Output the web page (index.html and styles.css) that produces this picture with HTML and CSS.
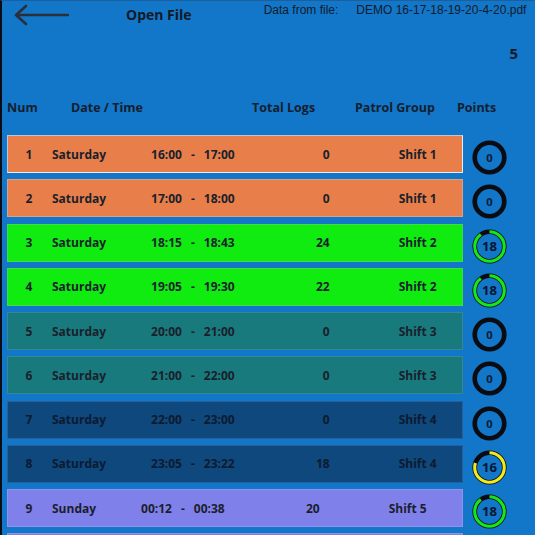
FILE: index.html
```html
<!DOCTYPE html>
<html>
<head>
<meta charset="utf-8">
<link rel="stylesheet" href="styles.css">
</head>
<body>
<div class="app">
  <div class="topbar">
    <svg class="back" width="56" height="22" viewBox="0 0 56 22">
      <path d="M3 11 H55 M13 2 L3 11 L13 20" fill="none" stroke="#2b2f3a" stroke-width="2.6" stroke-linecap="round" stroke-linejoin="round"/>
    </svg>
    <div class="title">Open File</div>
    <div class="data"><span>Data from file:</span><span class="fname">DEMO 16-17-18-19-20-4-20.pdf</span><span class="bar">|</span></div>
  </div>
  <div class="count">5</div>
  <div class="thead">
    <span class="h-num">Num</span>
    <span class="h-date">Date / Time</span>
    <span class="h-logs">Total Logs</span>
    <span class="h-group">Patrol Group</span>
    <span class="h-pts">Points</span>
  </div>
  <div class="list">
    <div class="line">
      <div class="row orange selected"><span class="num">1</span><span class="day">Saturday</span><span class="time"><span>16:00</span><span>-</span><span>17:00</span></span><span class="logs">0</span><span class="shift">Shift 1</span></div>
      <svg class="pts" viewBox="0 0 36 36"><circle class="base" cx="18" cy="18" r="15.2"/><text class="zero" x="18" y="22.5">0</text></svg>
    </div>
    <div class="line">
      <div class="row orange"><span class="num">2</span><span class="day">Saturday</span><span class="time"><span>17:00</span><span>-</span><span>18:00</span></span><span class="logs">0</span><span class="shift">Shift 1</span></div>
      <svg class="pts" viewBox="0 0 36 36"><circle class="base" cx="18" cy="18" r="15.2"/><text class="zero" x="18" y="22.5">0</text></svg>
    </div>
    <div class="line">
      <div class="row green"><span class="num">3</span><span class="day">Saturday</span><span class="time"><span>18:15</span><span>-</span><span>18:43</span></span><span class="logs">24</span><span class="shift">Shift 2</span></div>
      <svg class="pts" viewBox="0 0 36 36"><circle class="base" cx="18" cy="18" r="15.2"/><circle class="arc g" cx="18" cy="18" r="15.2" pathLength="100" stroke-dasharray="90 100"/><text class="val" x="18" y="23">18</text></svg>
    </div>
    <div class="line">
      <div class="row green"><span class="num">4</span><span class="day">Saturday</span><span class="time"><span>19:05</span><span>-</span><span>19:30</span></span><span class="logs">22</span><span class="shift">Shift 2</span></div>
      <svg class="pts" viewBox="0 0 36 36"><circle class="base" cx="18" cy="18" r="15.2"/><circle class="arc g" cx="18" cy="18" r="15.2" pathLength="100" stroke-dasharray="90 100"/><text class="val" x="18" y="23">18</text></svg>
    </div>
    <div class="line">
      <div class="row teal"><span class="num">5</span><span class="day">Saturday</span><span class="time"><span>20:00</span><span>-</span><span>21:00</span></span><span class="logs">0</span><span class="shift">Shift 3</span></div>
      <svg class="pts" viewBox="0 0 36 36"><circle class="base" cx="18" cy="18" r="15.2"/><text class="zero" x="18" y="22.5">0</text></svg>
    </div>
    <div class="line">
      <div class="row teal"><span class="num">6</span><span class="day">Saturday</span><span class="time"><span>21:00</span><span>-</span><span>22:00</span></span><span class="logs">0</span><span class="shift">Shift 3</span></div>
      <svg class="pts" viewBox="0 0 36 36"><circle class="base" cx="18" cy="18" r="15.2"/><text class="zero" x="18" y="22.5">0</text></svg>
    </div>
    <div class="line">
      <div class="row navy"><span class="num">7</span><span class="day">Saturday</span><span class="time"><span>22:00</span><span>-</span><span>23:00</span></span><span class="logs">0</span><span class="shift">Shift 4</span></div>
      <svg class="pts" viewBox="0 0 36 36"><circle class="base" cx="18" cy="18" r="15.2"/><text class="zero" x="18" y="22.5">0</text></svg>
    </div>
    <div class="line">
      <div class="row navy"><span class="num">8</span><span class="day">Saturday</span><span class="time"><span>23:05</span><span>-</span><span>23:22</span></span><span class="logs">18</span><span class="shift">Shift 4</span></div>
      <svg class="pts" viewBox="0 0 36 36"><circle class="base" cx="18" cy="18" r="15.2"/><circle class="arc y" cx="18" cy="18" r="15.2" pathLength="100" stroke-dasharray="80 100"/><text class="val" x="18" y="23">16</text></svg>
    </div>
    <div class="line">
      <div class="row purple"><span class="num">9</span><span class="day">Sunday</span><span class="time"><span>00:12</span><span>-</span><span>00:38</span></span><span class="logs">20</span><span class="shift">Shift 5</span></div>
      <svg class="pts" viewBox="0 0 36 36"><circle class="base" cx="18" cy="18" r="15.2"/><circle class="arc g" cx="18" cy="18" r="15.2" pathLength="100" stroke-dasharray="90 100"/><text class="val" x="18" y="23">18</text></svg>
    </div>
    <div class="line">
      <div class="row purple"></div>
    </div>
  </div>
</div>
</body>
</html>
```

FILE: styles.css
```css
html, body {
  margin: 0;
  padding: 0;
  background: #1276c9;
  overflow: hidden;
}
.app {
  height: 534px;
  overflow: hidden;
  border-left: 2px solid #0b0d16;
  border-top: 1px solid #1d5f9c;
  background: #1276c9;
  font-family: "Open Sans", "DejaVu Sans", sans-serif;
  color: #15202e;
}
.topbar {
  display: flex;
  align-items: flex-start;
  height: 30px;
}
.back {
  margin-left: 11px;
  margin-top: 3px;
  flex: none;
}
.title {
  margin-left: 57px;
  margin-top: 5px;
  font-size: 14px;
  line-height: 18px;
  font-weight: 700;
  color: #141a26;
  white-space: nowrap;
  flex: none;
}
.data {
  margin-left: 72px;
  margin-top: 2px;
  font-family: "Liberation Sans", Arial, sans-serif;
  font-size: 12px;
  line-height: 15px;
  color: #131b2a;
  white-space: nowrap;
  display: flex;
}
.fname {
  margin-left: 18px;
}
.bar {
  margin-left: 12px;
}
.count {
  text-align: right;
  padding-right: 17px;
  font-size: 15px;
  font-weight: 700;
  line-height: 20px;
  margin-top: 12px;
  color: #141a26;
}
.thead {
  display: flex;
  margin-top: 36px;
  font-size: 12.5px;
  font-weight: 700;
  line-height: 18px;
  color: #15202e;
  white-space: nowrap;
}
.h-num { margin-left: 5px; width: 64px; }
.h-date { width: 181px; }
.h-logs { width: 103px; }
.h-group { width: 102px; }
.list {
  margin-top: 18px;
  padding-left: 5px;
}
.line {
  display: flex;
  align-items: flex-start;
  margin-bottom: 6.25px;
}
.row {
  box-sizing: border-box;
  width: 456px;
  height: 38px;
  border: 1px solid rgba(190, 205, 225, 0.45);
  display: flex;
  align-items: center;
  font-size: 12px;
  font-weight: 700;
  white-space: nowrap;
  color: #1a1f2c;
}
.row.selected {
  border-color: #e6ecf2;
  border-top-color: #b9c7d6;
  border-left-color: #b9c7d6;
}
.orange { background: #e87f4b; }
.green { background: #10ec10; border-color: rgba(120, 200, 120, 0.5); }
.teal { background: #187a7c; border-color: rgba(80, 150, 170, 0.5); }
.navy { background: #0e487d; border-color: rgba(60, 120, 180, 0.5); color: #0d1a30; }
.purple { background: #8080eb; border-color: rgba(160, 160, 240, 0.5); }
.num {
  width: 42px;
  text-align: center;
}
.day {
  margin-left: 2px;
}
.time {
  margin-left: 45px;
  display: flex;
  gap: 9px;
}
.logs {
  width: 95px;
  text-align: right;
}
.shift {
  width: 107px;
  text-align: right;
}
.pts {
  width: 35px;
  height: 35px;
  margin-left: 9px;
  margin-top: 5px;
  margin-bottom: -2px;
  flex: none;
}
.base {
  fill: none;
  stroke: #0a0c12;
  stroke-width: 4.8;
}
.arc {
  fill: none;
  stroke-width: 3.2;
  transform: rotate(-90deg);
  transform-origin: 18px 18px;
}
.arc.g { stroke: #14e81a; }
.arc.y { stroke: #f2ea1c; }
.zero {
  font-family: "Open Sans", "DejaVu Sans", sans-serif;
  font-size: 11.5px;
  font-weight: 700;
  fill: #0d1c33;
  text-anchor: middle;
}
.val {
  font-family: "Open Sans", "DejaVu Sans", sans-serif;
  font-size: 13.5px;
  font-weight: 700;
  fill: #0b1730;
  text-anchor: middle;
}
```
